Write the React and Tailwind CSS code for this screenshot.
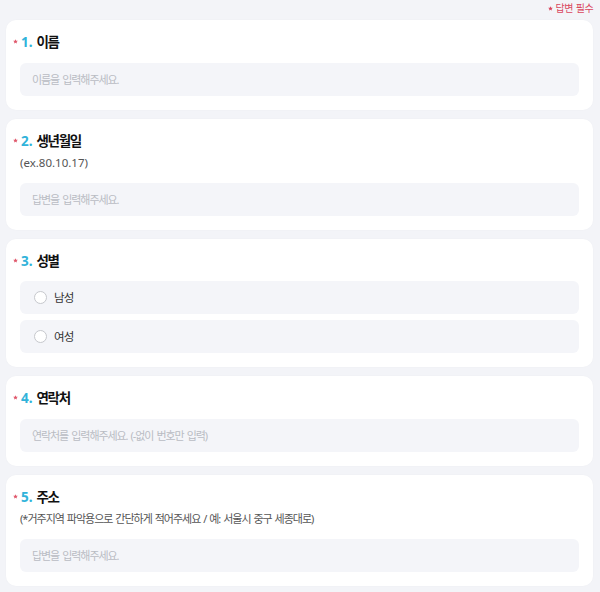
import { useState } from "react";

const questions = [
  { no: 1, title: "이름", placeholder: "이름을 입력해주세요." },
  { no: 2, title: "생년월일", desc: "(ex.80.10.17)", latin: true, placeholder: "답변을 입력해주세요." },
  { no: 3, title: "성별", options: ["남성", "여성"] },
  { no: 4, title: "연락처", placeholder: "연락처를 입력해주세요. (-없이 번호만 입력)" },
  {
    no: 5,
    title: "주소",
    desc: "(*거주지역 파악용으로 간단하게 적어주세요 / 예: 서울시 중구 세종대로)",
    placeholder: "답변을 입력해주세요.",
  },
];

function Star({ className = "" }) {
  return (
    <svg viewBox="0 0 10 10" className={className} fill="currentColor">
      <path d="M5 0.3l1.4 3 3.3 0.3-2.5 2.2 0.8 3.3L5 7.4 2 9.1l0.8-3.3L0.3 3.6l3.3-0.3z" />
    </svg>
  );
}

function Question({ q, value, onChange }) {
  return (
    <div className="bg-white rounded-[10px] px-[14px] pt-3 pb-[14px] shadow-[0_0_2px_rgba(0,0,0,0.03)]">
      <div className="flex items-center h-5 -ml-[7px]">
        <Star className="w-[5px] h-[5px] text-[#e0586c] mr-[3px] -mt-[1px]" />
        <span className="text-[13.5px] font-bold text-[#31b3da] mr-[4px]">{q.no}.</span>
        <span className="text-[13.5px] font-bold text-[#111] tracking-[-0.1em]">{q.title}</span>
      </div>
      {q.desc && (
        <p
          className={`mt-[3px] h-[18px] leading-[18px] text-[#555] ${
            q.latin ? "text-[11.5px]" : "text-[11px] tracking-[-0.09em] [word-spacing:1px]"
          }`}
        >
          {q.desc}
        </p>
      )}
      {q.options ? (
        <div className="mt-[10px] flex flex-col gap-[6px]">
          {q.options.map((opt) => (
            <label
              key={opt}
              className="h-[33px] rounded-md bg-[#f4f5f9] flex items-center pl-[14px] cursor-pointer"
              onClick={() => onChange(opt)}
            >
              <span
                className={`w-[13px] h-[13px] rounded-full bg-white ${
                  value === opt ? "border-4 border-[#31b3da]" : "border-[1.5px] border-[#c6c8cd]"
                }`}
              />
              <span className="ml-[7px] text-[11.5px] text-[#333] tracking-[-0.08em]">{opt}</span>
            </label>
          ))}
        </div>
      ) : (
        <input
          className="mt-[11px] w-full h-[33px] rounded-md bg-[#f4f5f9] px-3 text-[11px] text-[#333] tracking-[-0.1em] [word-spacing:1.5px] placeholder:text-[#b9bcc3] outline-none"
          placeholder={q.placeholder}
          value={value || ""}
          onChange={(e) => onChange(e.target.value)}
        />
      )}
    </div>
  );
}

export default function App() {
  const [answers, setAnswers] = useState({});

  return (
    <div
      className="min-h-screen bg-[#f3f4f8] pl-[6px] pr-[7px] pb-2"
      style={{ fontFamily: '"Noto Sans", "Noto Sans CJK KR", sans-serif' }}
    >
      <div className="h-4 flex items-center justify-end gap-[3px] text-[10px] text-[#d9465e] tracking-[-0.06em] [word-spacing:1px]">
        <Star className="w-[5px] h-[5px]" />
        <span>답변 필수</span>
      </div>
      <div className="mt-1 flex flex-col gap-[9px]">
        {questions.map((q) => (
          <Question
            key={q.no}
            q={q}
            value={answers[q.no]}
            onChange={(v) => setAnswers({ ...answers, [q.no]: v })}
          />
        ))}
      </div>
    </div>
  );
}
